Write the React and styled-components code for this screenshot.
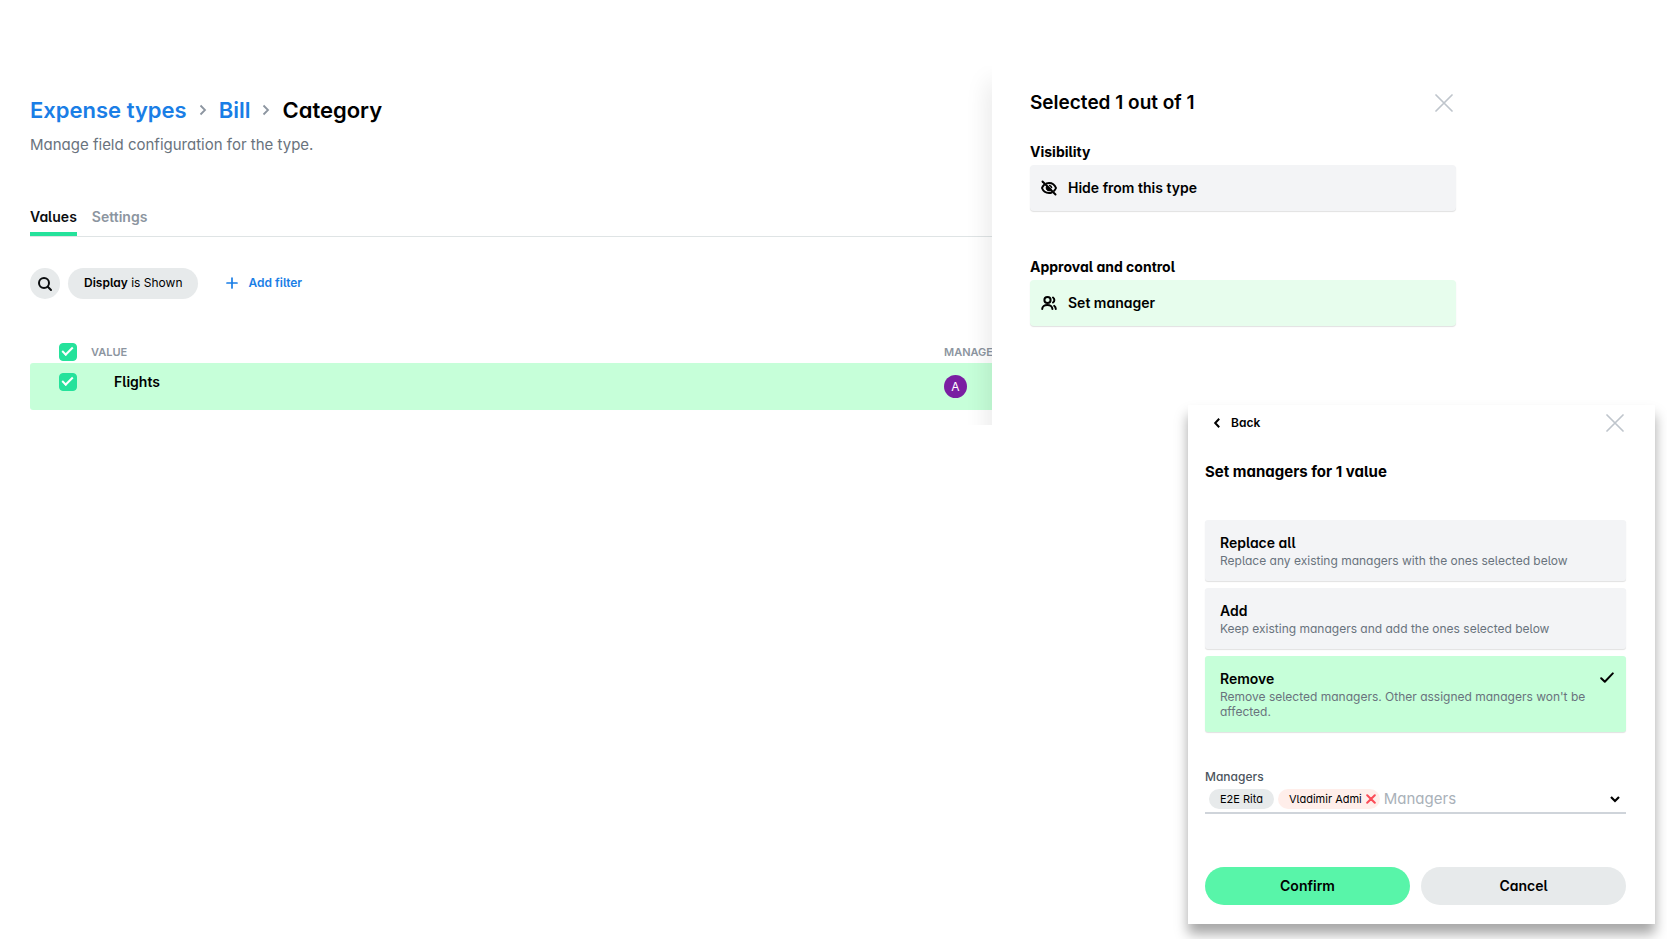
import React, { useState } from 'react';
import styled, { createGlobalStyle, css } from 'styled-components';

const App = () => {
  const [mode, setMode] = useState('remove');

  return (
    <>
      <GlobalStyle />
      <Page>
        <Main>
          <Breadcrumbs aria-label="Breadcrumb">
            <a href="#types">Expense types</a>
            <CrumbArrow />
            <a href="#bill">Bill</a>
            <CrumbArrow />
            <h1>Category</h1>
          </Breadcrumbs>
          <Subtitle>Manage field configuration for the type.</Subtitle>

          <Tabs role="tablist">
            <Tab role="tab" aria-selected="true" $active>Values</Tab>
            <Tab role="tab" aria-selected="false">Settings</Tab>
          </Tabs>

          <Filters>
            <SearchButton aria-label="Search">
              <svg width="16" height="16" viewBox="0 0 16 16" fill="none" stroke="#0b0d0f" strokeWidth="2" strokeLinecap="round">
                <circle cx="7" cy="7" r="5" />
                <path d="M10.8 10.8L14 14" />
              </svg>
            </SearchButton>
            <FilterChip><b>Display</b> is Shown</FilterChip>
            <AddFilter>
              <svg width="12" height="12" viewBox="0 0 12 12" stroke="#1a7ee6" strokeWidth="1.7" strokeLinecap="round">
                <path d="M6 1v10M1 6h10" />
              </svg>
              Add filter
            </AddFilter>
          </Filters>

          <Table>
            <colgroup>
              <col className="check" />
              <col />
              <col className="manager" />
            </colgroup>
            <thead>
              <tr>
                <th><Checkbox type="checkbox" aria-label="Select all" defaultChecked /></th>
                <th scope="col">VALUE</th>
                <th scope="col">MANAGER</th>
              </tr>
            </thead>
            <tbody>
              <tr>
                <td><Checkbox type="checkbox" aria-label="Select Flights" defaultChecked /></td>
                <td><ValueName>Flights</ValueName></td>
                <td><Avatar>A</Avatar></td>
              </tr>
            </tbody>
          </Table>
        </Main>

        <Side>
          <Panel>
            <PanelHeader>
              <h2>Selected 1 out of 1</h2>
              <Close />
            </PanelHeader>
            <ActionGroup>
              <h3>Visibility</h3>
              <Action>
                <HideIcon />
                Hide from this type
              </Action>
            </ActionGroup>
            <ActionGroup>
              <h3>Approval and control</h3>
              <Action $highlight>
                <PeopleIcon />
                Set manager
              </Action>
            </ActionGroup>
          </Panel>

          <Dialog role="dialog" aria-labelledby="dialog-title">
            <DialogHeader>
              <BackButton>
                <svg width="8" height="12" viewBox="0 0 8 12" fill="none" stroke="#000" strokeWidth="2">
                  <path d="M6.2 1.8L2.2 6l4 4.2" />
                </svg>
                Back
              </BackButton>
              <Close />
            </DialogHeader>
            <h2 id="dialog-title">Set managers for 1 value</h2>

            <Options>
              {options.map((option) => (
                <Option
                  key={option.id}
                  aria-pressed={mode === option.id}
                  $selected={mode === option.id}
                  onClick={() => setMode(option.id)}
                >
                  <strong>{option.title}</strong>
                  <span>{option.text}</span>
                  {mode === option.id && <CheckIcon />}
                </Option>
              ))}
            </Options>

            <FieldLabel htmlFor="managers">Managers</FieldLabel>
            <Field>
              <Tag>E2E Rita</Tag>
              <Tag $removing>
                <span>Vladimir Admi</span>
                <button aria-label="Remove Vladimir Admi">
                  <svg width="10" height="10" viewBox="0 0 10 10" stroke="#fb4b57" strokeWidth="2" strokeLinecap="round">
                    <path d="M1.2 1.2l7.6 7.6M8.8 1.2L1.2 8.8" />
                  </svg>
                </button>
              </Tag>
              <input id="managers" type="text" placeholder="Managers" />
              <DropButton aria-label="Open list">
                <svg width="12" height="8" viewBox="0 0 12 8" fill="none" stroke="#000" strokeWidth="2.2">
                  <path d="M2 2l4 4 4-4" />
                </svg>
              </DropButton>
            </Field>

            <Buttons>
              <Button $primary>Confirm</Button>
              <Button>Cancel</Button>
            </Buttons>
          </Dialog>
        </Side>
      </Page>
    </>
  );
}

const options = [
  { id: 'replace', title: 'Replace all', text: 'Replace any existing managers with the ones selected below' },
  { id: 'add', title: 'Add', text: 'Keep existing managers and add the ones selected below' },
  { id: 'remove', title: 'Remove', text: "Remove selected managers. Other assigned managers won't be affected." },
];

const CrumbArrow = () => (
  <svg width="8" height="12" viewBox="0 0 8 12" fill="none" stroke="#8c95a0" strokeWidth="1.8">
    <path d="M1.5 1.5L6 6l-4.5 4.5" />
  </svg>
);

const Close = () => (
  <CloseButton aria-label="Close">
    <svg width="18" height="18" viewBox="0 0 18 18" stroke="#bfc5cc" strokeWidth="1.7" strokeLinecap="round">
      <path d="M1 1l16 16M17 1L1 17" />
    </svg>
  </CloseButton>
);

const HideIcon = () => (
  <svg width="16" height="16" viewBox="0 0 16 16" fill="none" stroke="#000" strokeWidth="2" strokeLinecap="round">
    <path d="M5.6 3.5C6.4 3.2 7.2 3 8 3c3.4 0 6 2.4 7 5-.4 1-1 1.900-1.800 2.700M3 4.900C2.100 5.700 1.400 6.800 1 8c1 2.600 3.600 5 7 5 1 0 1.900-.2 2.700-.5" />
    <path d="M6 6a2.800 2.800 0 1 0 4 4z" fill="#000" strokeWidth="1" />
    <path d="M8.600 5.500a2.600 2.600 0 0 1 1.900 2" strokeWidth="1.600" />
    <path d="M1.500 1.500l13 13" />
  </svg>
);

const PeopleIcon = () => (
  <svg width="16" height="16" viewBox="0 0 16 16" fill="none" stroke="#000" strokeWidth="2" strokeLinecap="round">
    <circle cx="6.500" cy="5" r="3.100" />
    <path d="M1.200 14c0-2.400 2.300-4 5.100-4s5.100 1.600 5.100 4" />
    <path d="M12 2.500a3 3 0 0 1 0 5M13.200 10.800c1 .6 1.600 1.700 1.600 3.200" />
  </svg>
);

const CheckIcon = () => (
  <svg width="14" height="12" viewBox="0 0 14 12" fill="none" stroke="#000" strokeWidth="2" strokeLinecap="round" strokeLinejoin="round">
    <path d="M1.200 6.200L4.800 9.800 12.800 1.400" />
  </svg>
);

const GlobalStyle = createGlobalStyle`
  * {
    box-sizing: border-box;
  }

  body {
    margin: 0;
    background: #fff;
    color: #000;
    font-family: Inter, "Liberation Sans", sans-serif;
    font-feature-settings: "cv11", "cv05";
    font-size: 15px;
    line-height: 20px;
  }

  h1, h2, h3, p {
    margin: 0;
  }

  button, input {
    font: inherit;
    font-feature-settings: inherit;
    color: inherit;
  }

  button {
    border: 0;
    padding: 0;
    background: none;
    cursor: pointer;
  }

  svg {
    display: block;
    flex: none;
  }
`;

const Page = styled.div`
  display: grid;
  grid-template-columns: minmax(0, 1fr) 675px;
  align-items: start;
  min-height: 100vh;
  padding: 66px 0 15px;
`;

const Main = styled.main`
  position: relative;
  overflow: hidden;
  padding: 28px 0 15px 30px;

  /* shade cast by the side panel */
  &::after {
    content: '';
    position: absolute;
    inset: 16px -10px -30px auto;
    width: 10px;
    box-shadow: 0 0 24px rgba(0, 0, 0, 0.18);
    pointer-events: none;
  }
`;

const Breadcrumbs = styled.nav`
  display: flex;
  align-items: center;
  gap: 12px;
  font-size: 22px;
  font-weight: 600;
  font-feature-settings: "cv11";
  line-height: 32px;

  h1 {
    font-size: inherit;
    font-weight: inherit;
  }

  a {
    color: #1a7ee6;
    text-decoration: none;
  }
`;

const Subtitle = styled.p`
  margin-top: 8px;
  padding-top: 1px;
  color: #69737d;
  font-feature-settings: "cv11";
`;

const Tabs = styled.div`
  display: flex;
  gap: 15px;
  margin-top: 51px;
  border-bottom: 1px solid #dfe4e5;
`;

const Tab = styled.button`
  height: 30px;
  padding-bottom: 4px;
  border-bottom: 4px solid ${(props) => (props.$active ? '#25e29b' : 'transparent')};
  border-radius: 2px 2px 0 0;
  color: ${(props) => (props.$active ? '#0b0d0f' : '#8c95a0')};
  font-size: 14px;
  font-weight: 600;
`;

const Filters = styled.div`
  display: flex;
  align-items: center;
  gap: 8px;
  margin-top: 31px;
  font-size: 12px;
`;

const SearchButton = styled.button`
  display: grid;
  place-items: center;
  width: 30px;
  height: 31px;
  border-radius: 16px;
  background: #e7eaeb;
`;

const FilterChip = styled.button`
  height: 31px;
  padding: 0 16px 2px;
  border-radius: 16px;
  background: #e7eaeb;

  b {
    font-weight: 600;
  }
`;

const AddFilter = styled.button`
  display: flex;
  align-items: center;
  gap: 10px;
  margin-left: 20px;
  padding-bottom: 2px;
  color: #1a7ee6;
  font-weight: 600;
`;

const Table = styled.table`
  width: 100%;
  margin-top: 43px;
  table-layout: fixed;
  border-collapse: separate;
  border-spacing: 0;
  text-align: left;

  .check {
    width: 61px;
  }

  .manager {
    width: 48px;
  }

  th {
    height: 21px;
    padding: 0 0 1px;
    color: #8c95a0;
    font-size: 11px;
    font-weight: 600;
    line-height: 20px;
  }

  th:first-child,
  td:first-child {
    padding-left: 29px;
  }

  td {
    height: 47px;
    padding: 10px 0 0;
    background: #c6ffd9;
    vertical-align: top;
  }

  td:first-child {
    border-radius: 3px 0 0 3px;
  }

  td:nth-child(2) {
    padding-top: 9px;
  }

  td:last-child {
    padding-top: 12px;
  }
`;

const Checkbox = styled.input`
  display: block;
  appearance: none;
  width: 18px;
  height: 18px;
  margin: 0;
  border-radius: 4px;
  background: #fff;
  border: 1px solid #25e29b;

  &:checked {
    background: #25e29b;
  }

  &:checked::after {
    content: '';
    display: block;
    box-sizing: border-box;
    width: 11px;
    height: 6px;
    margin: 3px 0 0 2px;
    border: solid #fff;
    border-width: 0 0 2px 2px;
    transform: rotate(-45deg);
  }
`;

const ValueName = styled.span`
  padding-left: 23px;
  font-size: 14px;
  font-weight: 600;
`;

const Avatar = styled.span`
  display: block;
  width: 23px;
  border-radius: 50%;
  background: #7a1fa2;
  color: #fff;
  font-size: 12px;
  line-height: 23px;
  text-align: center;
`;

const Side = styled.aside`
  display: flex;
  flex-direction: column;
`;

const Panel = styled.section`
  width: 464px;
  padding: 24px 0 79px 38px;
`;

const PanelHeader = styled.header`
  display: flex;
  align-items: center;
  justify-content: space-between;
  padding-right: 3px;

  h2 {
    font-size: 19px;
    font-weight: 600;
    font-feature-settings: "cv11";
    line-height: 26px;
  }
`;

const CloseButton = styled.button`
  display: flex;
`;

const ActionGroup = styled.div`
  margin-top: 26px;

  & + & {
    margin-top: 46px;
  }

  h3 {
    margin-bottom: 3px;
    font-size: 14px;
    font-weight: 700;
    line-height: 20px;
  }
`;

const Action = styled.button`
  display: flex;
  align-items: center;
  gap: 11px;
  width: 100%;
  height: 46px;
  padding: 0 11px;
  border-radius: 4px;
  background: ${(props) => (props.$highlight ? '#e7fded' : '#f3f4f6')};
  box-shadow: 0 1px 1px rgba(0, 0, 0, 0.12);
  font-size: 14px;
  font-weight: 600;
`;

const Dialog = styled.section`
  align-self: flex-end;
  width: 467px;
  margin-right: 12px;
  padding: 8px 29px 19px 17px;
  background: #fff;
  box-shadow: 0 10px 12px rgba(0, 0, 0, 0.35);

  h2 {
    margin-top: 27px;
    font-size: 15px;
    font-weight: 700;
    line-height: 24px;
  }
`;

const DialogHeader = styled.header`
  display: flex;
  align-items: center;
  justify-content: space-between;
  padding: 0 2px 0 8px;
`;

const BackButton = styled.button`
  display: flex;
  align-items: center;
  gap: 10px;
  font-size: 12px;
  font-weight: 600;
`;

const Options = styled.div`
  display: grid;
  gap: 7px;
  margin-top: 36px;
`;

const Option = styled.button`
  position: relative;
  display: flex;
  flex-direction: column;
  gap: 1px;
  padding: 14px 15px 13px;
  border-radius: 3px;
  background: ${(props) => (props.$selected ? '#c6ffd9' : '#f3f4f6')};
  box-shadow: 0 1px 1px rgba(0, 0, 0, 0.12);
  text-align: left;

  strong {
    font-size: 14px;
    font-weight: 600;
    line-height: 18px;
  }

  span {
    color: #69737d;
    font-size: 12px;
    line-height: 15px;
  }

  svg {
    position: absolute;
    top: 16px;
    right: 12px;
  }
`;

const FieldLabel = styled.label`
  display: block;
  margin-top: 35px;
  color: #4c555e;
  font-size: 12px;
  font-weight: 500;
  line-height: 19px;
`;

const Field = styled.div`
  display: flex;
  align-items: center;
  gap: 4px;
  padding: 3px 4px;
  border-bottom: 2px solid #cfd4da;

  input {
    flex: 1;
    min-width: 0;
    height: 20px;
    padding: 0;
    border: 0;
    outline: 0;
    background: none;
    font-size: 15px;
  }

  input::placeholder {
    color: #a9b1b9;
  }
`;

const Tag = styled.span`
  display: flex;
  align-items: center;
  gap: 4px;
  height: 20px;
  padding: 0 11px;
  border-radius: 10px;
  background: #e7eaeb;
  font-size: 11px;

  ${(props) => props.$removing && css`
    padding-right: 4px;
    background: #ffeeea;
  `}
`;

const DropButton = styled.button`
  padding: 4px 1px;
`;

const Buttons = styled.div`
  display: grid;
  grid-template-columns: 1fr 1fr;
  gap: 11px;
  margin-top: 53px;
`;

const Button = styled.button`
  height: 38px;
  border-radius: 19px;
  background: ${(props) => (props.$primary ? '#58f5a9' : '#e7eaeb')};
  font-size: 14px;
  font-weight: 600;
`;

export default App;
